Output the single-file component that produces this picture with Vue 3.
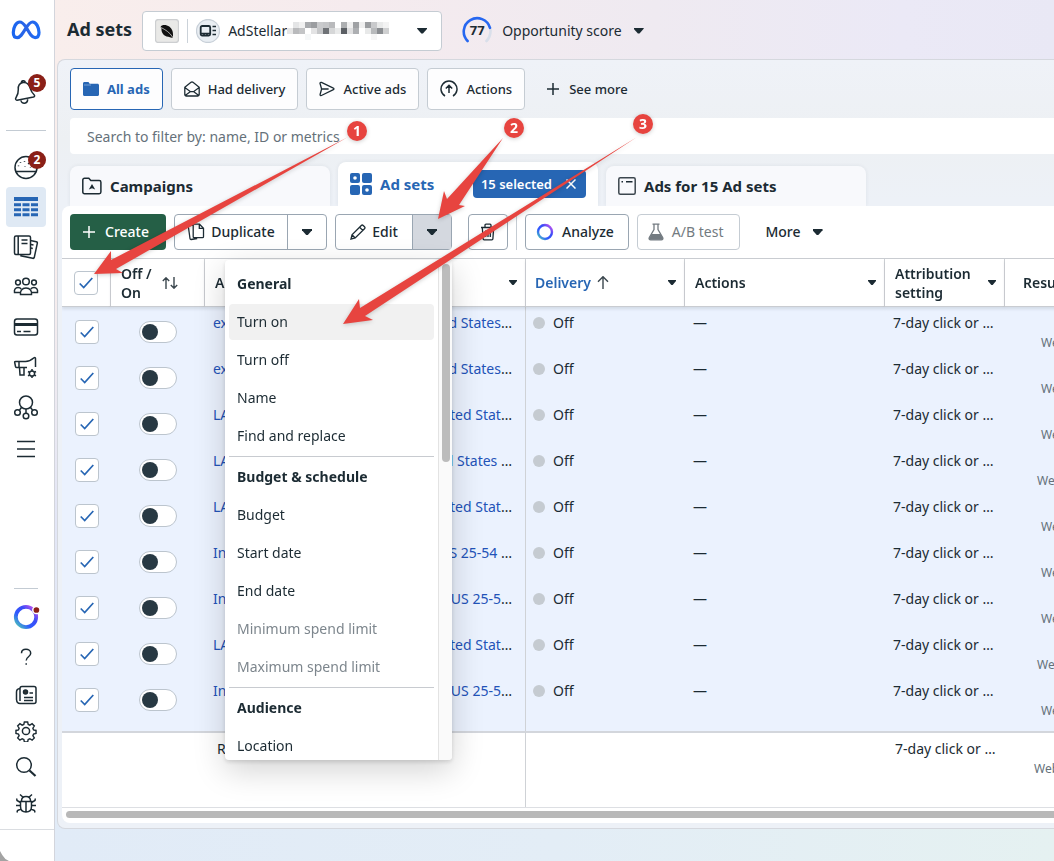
<script setup>
import { ref } from 'vue'

const filterText = ref('')

const rows = [
  { head: 'ex', tail: 'd States', short: false },
  { head: 'ex', tail: 'd States', short: false },
  { head: 'LA', tail: 'ited Stat', short: false },
  { head: 'LA', tail: 'd States ', short: true },
  { head: 'LA', tail: 'ited Stat', short: false },
  { head: 'In', tail: 'US 25-54 ', short: false },
  { head: 'In', tail: 'US 25-5', short: false },
  { head: 'LA', tail: 'ited Stat', short: true },
  { head: 'In', tail: 'US 25-5', short: false },
  { head: 'In', tail: 'ited Stat', short: false },
]

const menu = [
  { title: 'General', items: [{ t: 'Turn on', on: true }, { t: 'Turn off' }, { t: 'Name' }, { t: 'Find and replace' }] },
  { title: 'Budget & schedule', items: [{ t: 'Budget' }, { t: 'Start date' }, { t: 'End date' }, { t: 'Minimum spend limit', off: true }, { t: 'Maximum spend limit', off: true }] },
  { title: 'Audience', items: [{ t: 'Location' }] },
]

const mosaic = [
  ['#e6e6e6', 0, 7], ['#b9babc', 6, 7], ['#e4e5e6', 6, 1], ['#f1f1f1', 12, 1], ['#a9abae', 18, 1], ['#c3c4c6', 12, 7], ['#e3e3e4', 24, 7],
  ['#9b9da0', 24, 1], ['#c9cacc', 30, 1], ['#f5f7f8', 18, 13], ['#c6c7c9', 30, 7], ['#6f7276', 36, 7], ['#c5c6c8', 36, 1], ['#d6d7d8', 42, 7], ['#b9babc', 42, 1],
  ['#e9eaea', 48, 7], ['#5b5f64', 54, 7], ['#adafb1', 54, 1], ['#e0e0e1', 60, 7], ['#f0f0f0', 60, 1], ['#adafb2', 66, 7], ['#9fa1a4', 66, 1],
  ['#efefef', 72, 1], ['#e8e9e9', 78, 7], ['#9c9ea1', 78, 1], ['#b8babc', 84, 7], ['#c9cacc', 84, 1], ['#8b8e92', 90, 7], ['#e9eaea', 90, 1], ['#cfd0d1', 96, 7], ['#f3f3f3', 96, 1], ['#f6f6f6', 84, 13],
]
</script>

<template>
  <div class="app">
    <aside class="side">
      <nav class="rail" aria-label="Main">
        <a class="logo" href="#" aria-label="Meta">
          <svg width="30" height="20" viewBox="0 0 30 20">
            <defs><linearGradient id="mg"><stop offset="0" stop-color="#1a66f0" /><stop offset=".5" stop-color="#2a63e6" /><stop offset="1" stop-color="#1d6cf5" /></linearGradient></defs>
            <path stroke="url(#mg)" stroke-width="3.2" d="M15 7C12.600 3.600 11 2 8.800 2 5 2 2.300 7.500 2.300 12.600c0 3.200 1.500 5.100 3.900 5.100C9 17.700 10.800 15 15 8c3-4.800 4.600-6 6.600-6C25.200 2 28 7.500 28 12.600c0 3.200-1.500 5.100-3.900 5.100C21.200 17.700 19.500 15 15 7Z" />
          </svg>
        </a>
        <button class="nav bell" aria-label="Notifications">
          <svg width="26" height="28" viewBox="0 0 26 28"><path d="M10 4.500c-3.500.6-5 3.500-4.700 7 .3 4-.8 5.700-2.500 8.500-.6 1 0 2.300 1.300 2.200L20.500 19c1.200-.3 1.500-1.500.6-2.300-2.200-2-2.800-3-3.700-6C16.300 6.500 13.800 3.900 10 4.500ZM8.500 4.800c-.4-2.200 3.200-3 3.800-.6M8 22.500c.3 4 7 3.500 6.600-1.200" /></svg>
          <span class="badge">5</span>
        </button>
        <hr class="rule">
        <button class="nav" aria-label="Overview">
          <svg width="26" height="26" viewBox="0 0 26 26"><circle cx="13" cy="13.500" r="11" /><path d="M2.500 17.500h21M5.500 11.500v.8M7.500 8v.8M11.500 7v.8M12 12.500v.6M17.500 13.500v.6M15 10l3-2" /></svg>
          <span class="badge">2</span>
        </button>
        <button class="nav active" aria-label="Ads manager">
          <svg class="fill" width="24" height="20" viewBox="0 0 24 20"><path d="M0 0h24v4H0zM0 6.200h7v3H0zM8.500 6.200h7v3h-7zM17 6.200h7v3h-7zM0 11.200h7v3H0zM8.500 11.200h7v3h-7zM17 11.200h7v3h-7zM0 16.200h7v3H0zM8.500 16.200h7v3h-7zM17 16.200h7v3h-7z" /></svg>
        </button>
        <button class="nav" aria-label="Reports">
          <svg width="26" height="26" viewBox="0 0 26 26"><rect x="1.500" y="2" width="16" height="18.500" rx="1.500" /><path d="M5.200 2v18.500M8.500 6h6M8.500 9.500h6M17.500 6.500l5.800 1.200c.8.200 1.200.8 1 1.600l-3 14c-.2.800-.8 1.200-1.600 1L8 21.800v-1M18 10.500l2.500.5M18 14l1.800.4" /></svg>
        </button>
        <button class="nav" aria-label="Audiences">
          <svg width="26" height="22" viewBox="0 0 26 22"><circle cx="13" cy="5.500" r="3.300" /><circle cx="5" cy="6.500" r="2.400" /><circle cx="21" cy="6.500" r="2.400" /><path d="M7.500 18.500c-.6-3 1.200-6.500 5.500-6.500s6.100 3.500 5.500 6.500ZM7 16.500H1.500c-.5-3 1-5 3.500-5 1.500 0 2.500.5 3.200 1.500M19 16.500h5.500c.5-3-1-5-3.500-5-1.500 0-2.500.5-3.200 1.500" /></svg>
        </button>
        <button class="nav" aria-label="Billing">
          <svg width="26" height="22" viewBox="0 0 26 22"><rect x="1.500" y="3" width="23" height="16" rx="2.500" /><path d="M4 15.500h4M10.500 15.500h7" /><path stroke-width="3" d="M1.500 8.500h23" /></svg>
        </button>
        <button class="nav" aria-label="Ad settings">
          <svg width="26" height="24" viewBox="0 0 26 24"><path d="M22.500 12V3.500c0-1-.8-1.200-1.500-.7C18.500 5 15.500 6.500 12.500 6.500h-10c-.8 0-1 .4-.8 1l.8 4c.2.700.6 1 1.300 1H14M6 7v5.500M6.500 12.500l.5 7.500h4v-7.500" /><path d="M19 14v2m0 5v2m-4-6.500 1.600.9m4.700 2.600 1.700.9m0-4.400-1.700.9m-4.700 2.600-1.600.9" /><circle cx="19" cy="18.500" r="2.600" /></svg>
        </button>
        <button class="nav" aria-label="Events">
          <svg width="26" height="26" viewBox="0 0 26 26"><circle cx="13" cy="8.500" r="6.500" /><circle cx="4.500" cy="18.500" r="2.800" /><circle cx="13" cy="22" r="2.800" /><circle cx="21.500" cy="18.500" r="2.800" /><path d="M13 15v4M8.500 13.500l-2 2.500M17.500 13.500l2 2.500" /></svg>
        </button>
        <button class="nav tall" aria-label="All tools">
          <svg width="20" height="18" viewBox="0 0 20 18"><path d="M1 1.500h18M1 9h18M1 16.500h18" /></svg>
        </button>

        <hr class="rule low">
        <button class="nav" aria-label="Assistant">
          <svg width="28" height="28" viewBox="0 0 28 28">
            <defs><linearGradient id="rg" x1="0" y1="1" x2="1" y2="0"><stop offset="0" stop-color="#4fd0b0" /><stop offset=".35" stop-color="#2f5bff" /><stop offset=".65" stop-color="#3b4cf6" /><stop offset="1" stop-color="#e055f0" /></linearGradient></defs>
            <circle cx="14" cy="14" r="10.200" stroke="url(#rg)" stroke-width="3.800" /><circle cx="24.400" cy="7" r="3.600" fill="#8a1f17" stroke="#fff" />
          </svg>
        </button>
        <button class="nav" aria-label="Help">
          <svg width="14" height="18" viewBox="0 0 14 18"><path d="M2.500 5.200C2.500 2.800 4.500 1.300 7 1.300s4.700 1.500 4.700 4C11.700 9 7.200 8.500 7.200 12.500M7.200 15.200v1.600" /></svg>
        </button>
        <button class="nav short" aria-label="News">
          <svg width="22" height="20" viewBox="0 0 22 20"><path d="M5 3.500C5 2 5.500 1.500 7 1.500h12c1.500 0 2 .5 2 2v13c0 1.500-.5 2-2 2H5c-2.500 0-3.300-1.500-3.500-4V7c0-1.700.8-3.300 3.500-3.500Zm0 0V16M9 12.500h9M9 15.500h9M14.500 8H18" /><circle cx="10.500" cy="7" r="2" fill="#333" /></svg>
        </button>
        <button class="nav short" aria-label="Settings">
          <svg width="22" height="22" viewBox="0 0 22 22"><path d="M9.300 1.500h3.400l.6 2.700 1.700.7 2.400-1.500 2.300 2.300-1.500 2.400.7 1.700 2.600.6v3.200l-2.600.6-.7 1.700 1.500 2.400-2.300 2.300-2.400-1.500-1.700.7-.6 2.600H9.300l-.6-2.600-1.700-.7-2.400 1.500-2.300-2.300 1.500-2.400-.7-1.700-2.600-.6v-3.200l2.600-.6.7-1.700-1.500-2.400 2.300-2.300L7 4.900l1.700-.7Z" transform="translate(.5 .5) scale(.955)" /><circle cx="11" cy="11" r="3.600" /></svg>
        </button>
        <button class="nav short" aria-label="Search">
          <svg width="22" height="22" viewBox="0 0 22 22"><circle cx="9" cy="9" r="7.300" /><path stroke-width="2.200" d="m14.500 14.500 6 5.500" /></svg>
        </button>
        <button class="nav short" aria-label="Report a bug">
          <svg width="22" height="22" viewBox="0 0 22 22"><path d="M5.500 9.500h11v5c0 3.500-2.300 5.500-5.500 5.500s-5.500-2-5.500-5.500ZM6.500 9c0-3 1.700-4.500 4.500-4.500S15.500 6 15.500 9M11 10v10M7.800 5 5 2.500M14.200 5 17 2.500M5.500 10.500 2 8.500l-.3-2M16.500 10.500l3.500-2 .3-2M5.500 13.500H1M16.500 13.500H21M6 17l-3.500 1.500L2 20.500M16 17l3.500 1.500.5 2" /></svg>
        </button>
      </nav>
      <div class="corner"></div>
    </aside>

    <main class="main">
      <header class="top">
        <h1>Ad sets</h1>
        <button class="account">
          <svg width="24" height="24" viewBox="0 0 24 24"><rect x=".5" y=".5" width="23" height="23" rx="3" fill="#e9e9e7" stroke="#cdcfd1" /><path fill="#111" d="M7 6.500c4-1.500 9 1 10.500 5.500.5 1.500.8 5 .3 6.500-2 .4-3-.2-4.500-.7C8.500 17.500 6 13 6.500 9.500c-1.200-1-1-2.600.5-3Z" /><path stroke="#e9e9e7" stroke-width=".7" d="M6 8.500c4 2 9 5 11.500 9.500" /></svg>
          <i class="bar"></i>
          <svg width="24" height="24" viewBox="0 0 24 24"><circle cx="12" cy="12" r="11.500" fill="#e9eef3" stroke="#c8d0d8" /><rect x="4.700" y="7" width="9.500" height="9.500" rx="1.500" stroke="#1c2b33" stroke-width="1.800" /><path stroke="#1c2b33" stroke-width="1.600" d="M5 14.500h9M8 17v-2M11 17v-2M16.500 7.500H20M16.500 11.500H20M16.500 15.500H20" /></svg>
          <span class="acct">AdStellar<svg class="mosaic" width="104" height="20" viewBox="0 0 104 20"><rect v-for="(m, i) in mosaic" :key="i" :x="m[1]" :y="m[2]" width="6" height="6" :fill="m[0]" /></svg></span>
          <i class="caret"></i>
        </button>
        <button class="score">
          <span class="dial">
            <svg width="30" height="30" viewBox="0 0 30 30" stroke-linecap="round"><path stroke="#d9dfea" stroke-width="2.600" d="M28.500 14c.2 4-1.200 8-4 11" /><path stroke="#2667f0" stroke-width="2.600" d="M5.600 25A13.400 13.400 0 1 1 28 11.800" /></svg>
            <b>77</b>
          </span>
          Opportunity score
          <i class="caret"></i>
        </button>
      </header>

      <section class="panel">
        <div class="filters">
          <button class="chip sel"><svg width="16" height="14" viewBox="0 0 16 14"><path fill="#2766b4" d="M1.500 0h4l1.200 1.800H14.500c.9 0 1.500.6 1.500 1.500v9.200c0 .9-.6 1.500-1.500 1.500h-13C.6 14 0 13.400 0 12.500v-11C0 .6.600 0 1.500 0Z" /><path stroke="#8db0dc" stroke-width=".8" d="M1 3h7" /></svg>All ads</button>
          <button class="chip"><svg width="16" height="16" viewBox="0 0 16 16"><path d="M.8 6.200 7 1.300c.6-.4 1.400-.4 2 0l6.200 4.900v7.300c0 .9-.6 1.500-1.500 1.500H2.300c-.9 0-1.500-.6-1.500-1.500ZM.8 6.500l5.700 4.200h3l5.700-4.200M1.200 14.500l5.300-4M14.800 14.500l-5.300-4" /></svg>Had delivery</button>
          <button class="chip"><svg width="16" height="16" viewBox="0 0 16 16"><path d="M1 2.300c0-.8.700-1.200 1.400-.9l12 5.800c.7.300.7 1.200 0 1.500l-12 5.800c-.7.300-1.500-.2-1.300-1L2.600 8ZM2.600 8h7" /></svg>Active ads</button>
          <button class="chip"><svg width="18" height="18" viewBox="0 0 18 18"><path d="M5 16A8 8 0 1 1 13 16M9 13V5.500M5.800 8.500 9 5.300l3.200 3.200" stroke-width="1.500" /></svg>Actions</button>
          <button class="chip plain"><svg width="12" height="12" viewBox="0 0 12 12"><path d="M6 0v12M0 6h12" stroke-width="1.500" /></svg>See more</button>
        </div>

        <input v-model="filterText" class="search" type="text" placeholder="Search to filter by: name, ID or metrics" aria-label="Search to filter">

        <div class="tabs">
          <button class="tab"><svg width="20" height="18" viewBox="0 0 20 18"><path stroke="#1c2b33" d="M2.500 1.200h4.300l2 2.300h8.400c1 0 1.700.7 1.700 1.700v9.900c0 1-.7 1.700-1.700 1.700H2.500c-1 0-1.700-.7-1.700-1.700V2.900c0-1 .7-1.700 1.700-1.700Z" stroke-width="1.500" /><path fill="#1c2b33" d="m10 7 3.200 5.500-3.200-1.300-3.200 1.300Z" /></svg>Campaigns</button>
          <button class="tab cur">
            <svg width="22" height="22" viewBox="0 0 22 22"><g fill="#2766b4"><rect width="10" height="10" rx="2" /><rect x="12" width="10" height="10" rx="2" /><rect y="12" width="10" height="10" rx="2" /><rect x="12" y="12" width="10" height="10" rx="2" /></g><circle cx="5" cy="5" r="1.800" fill="#fff" /><circle cx="17" cy="17" r="1.800" fill="#fff" /></svg>
            Ad sets
            <span class="pill">15 selected<svg width="10" height="10" viewBox="0 0 10 10"><path stroke="#fff" stroke-width="1.500" d="m.5.5 9 9M9.500.5l-9 9" /></svg></span>
          </button>
          <button class="tab"><svg width="18" height="18" viewBox="0 0 18 18"><rect x=".8" y=".8" width="16.400" height="16.400" rx="1.500" stroke="#3c474e" stroke-width="1.500" /><path stroke="#1c2b33" stroke-width="1.500" d="M3.500 4.800H5M8 4.800h6.500" /></svg>Ads for 15 Ad sets</button>
        </div>

        <div class="card">
          <div class="tools">
            <button class="btn create"><svg width="12" height="12" viewBox="0 0 12 12"><path stroke="#fff" stroke-width="1.500" d="M6 0v12M0 6h12" /></svg>Create</button>
            <div class="split dup">
              <button><svg width="18" height="18" viewBox="0 0 18 18"><path d="M7.200 1.200h5.300l4 4v8.500c0 .6-.4 1-1 1H7.200c-.6 0-1-.4-1-1V2.200c0-.6.4-1 1-1ZM12.300 1.400v4h4M6 2.200l-3.700.6c-.6.100-1 .6-.9 1.200L3 15.500c.1.700.6 1.100 1.200 1l6-1" /></svg>Duplicate</button>
              <button class="arrow" aria-label="Duplicate options"><i class="caret"></i></button>
            </div>
            <div class="split edit">
              <button><svg width="16" height="16" viewBox="0 0 16 16"><path d="m1 15 1-4.200L11.300 1.500c.6-.6 1.300-.6 1.900 0l1.300 1.300c.6.600.6 1.300 0 1.900L5.200 14ZM9.600 3.200l3.200 3.200M2 10.800 5.200 14" /></svg>Edit</button>
              <button class="arrow open" aria-label="Edit options" aria-expanded="true"><i class="caret"></i></button>
              <div class="menu" role="menu">
                <div class="list">
                  <div v-for="g in menu" :key="g.title" class="group">
                    <h3>{{ g.title }}</h3>
                    <button v-for="it in g.items" :key="it.t" role="menuitem" :class="{ hot: it.on }" :disabled="it.off">{{ it.t }}</button>
                  </div>
                </div>
                <div class="track"><div class="thumb"></div></div>
              </div>
            </div>
            <button class="btn trash" aria-label="Delete"><svg width="16" height="18" viewBox="0 0 16 18"><path d="M1 4.500h14M5 4.300V2.200c0-.6.4-1 1-1h4c.6 0 1 .4 1 1v2.100M2.300 4.500l.8 11.300c0 .6.500 1 1.100 1h7.600c.6 0 1.100-.4 1.100-1l.8-11.300M5.700 7.500v6.500M8 7.500v6.500M10.300 7.500v6.500" /></svg></button>
            <i class="sep"></i>
            <button class="btn"><svg width="18" height="18" viewBox="0 0 18 18"><circle cx="9" cy="9" r="7" stroke="url(#rg)" stroke-width="2.400" /></svg>Analyze</button>
            <button class="btn ab" disabled><svg width="16" height="18" viewBox="0 0 16 18"><path stroke="#737b81" d="M4.500 1.200h7M6 1.500v5L1.300 14.500c-.6 1.200 0 2.300 1.400 2.300h10.600c1.400 0 2-1.100 1.400-2.300L10 6.500v-5" /><path fill="#737b81" d="M3.500 11h9l2.300 4c.4 1-.2 1.800-1.300 1.800h-11c-1.100 0-1.700-.8-1.300-1.800Z" /></svg>A/B test</button>
            <button class="btn more">More<i class="caret"></i></button>
          </div>

          <div class="grid">
            <table>
              <colgroup><col class="c1"><col class="c2"><col class="c3"><col class="c4"><col class="c5"><col class="c6"><col class="c7"></colgroup>
              <thead>
                <tr>
                  <th><label class="cb"><input type="checkbox" checked aria-label="Select all"><svg width="14" height="12" viewBox="0 0 14 12"><path d="m.7 6.500 4 4L13.300 1" /></svg></label></th>
                  <th><div class="th"><span>Off /<br>On</span><svg class="sort" width="16" height="12" viewBox="0 0 16 12"><path d="M4 12V1M.8 4 4 .8 7.200 4M12 0v11M8.800 8l3.200 3.200L15.200 8" /></svg></div></th>
                  <th><div class="th">A<i class="caret"></i></div></th>
                  <th><div class="th blue">Delivery<svg class="up" width="12" height="13" viewBox="0 0 12 13"><path d="M6 13V1M1 5.700l5-5 5 5" /></svg><i class="caret"></i></div></th>
                  <th><div class="th">Actions<i class="caret"></i></div></th>
                  <th><div class="th"><span>Attribution<br>setting</span><i class="caret"></i></div></th>
                  <th><div class="th res">Results</div></th>
                </tr>
              </thead>
              <tbody>
                <tr v-for="(r, i) in rows" :key="i">
                  <td class="pick"><label class="cb"><input type="checkbox" checked :aria-label="'Select row ' + (i + 1)"><svg width="14" height="12" viewBox="0 0 14 12"><path d="m.7 6.500 4 4L13.300 1" /></svg></label></td>
                  <td class="onoff"><input class="switch" type="checkbox" role="switch" :aria-label="'Row ' + (i + 1) + ' on or off'"></td>
                  <td class="name"><div><a href="#">{{ r.head }}</a><span><a href="#">{{ r.tail }}</a>…</span></div></td>
                  <td class="deliv"><i class="dot"></i>Off</td>
                  <td class="dash">—</td>
                  <td class="attr">7-day click or …</td>
                  <td class="web" :class="{ near: r.short }">Website</td>
                </tr>
              </tbody>
              <tfoot>
                <tr>
                  <td colspan="2"></td>
                  <td class="sum">R</td>
                  <td></td>
                  <td></td>
                  <td class="attr">7-day click or …</td>
                  <td class="web">Website</td>
                </tr>
              </tfoot>
            </table>
          </div>
          <div class="hscroll"><div></div></div>
        </div>
      </section>
      <footer class="base"></footer>
    </main>

    <svg class="notes" width="1054" height="861" viewBox="0 0 1054 861">
      <g fill="#e7443f">
        <path d="m348 137-237 123v-9L94 274l29-1-7-4Z" />
        <path d="m503 138-56 61-3-8-6 28 27-13-6-1Z" />
        <path d="M637 137 360 308l-1-9-16 25 30-4-8-4Z" />
        <circle cx="357" cy="131" r="10" /><circle cx="514" cy="128" r="10" /><circle cx="643" cy="124" r="10" />
      </g>
      <g class="nums"><text x="357" y="136">1</text><text x="514" y="133">2</text><text x="643" y="129">3</text></g>
    </svg>
  </div>
</template>

<style>
body { margin: 0; }
</style>

<style scoped>
* { box-sizing: border-box; }
.app { position: relative; display: flex; height: 100vh; overflow: hidden; font: 400 14px/20px "Noto Sans", sans-serif; color: #1c2b33; background: #fff; }
button, input { font: inherit; color: inherit; margin: 0; }
button { display: flex; align-items: center; padding: 0; border: 0; background: none; white-space: nowrap; }
a { color: #2353b8; text-decoration: none; }
svg { flex: none; fill: none; stroke-width: 1.3; }
.caret { flex: none; width: 10px; height: 6px; background: #1c2b33; clip-path: polygon(0 0, 100% 0, 100% 20%, 58% 100%, 42% 100%, 0 20%); }

.side { position: relative; flex: none; width: 55px; display: flex; flex-direction: column; padding-bottom: 31px; border-right: 1px solid #d3d5dc; }
.rail { flex: 1; display: flex; flex-direction: column; align-items: center; width: 54px; padding: 0 2px 8px 0; border-bottom: 1px solid #dadde1; }
.logo { display: flex; align-items: center; height: 60px; margin-bottom: 12px; }
.nav { position: relative; flex: none; justify-content: center; width: 40px; height: 40px; border-radius: 4px; }
.nav svg { stroke: #1c2b33; stroke-width: 1.5; }
.nav svg.fill { fill: #2766b4; stroke: none; }
.nav.short { height: 36px; }
.nav.tall { height: 44px; }
.active { background: #dfe9f4; }
.rule { width: 40px; height: 1px; margin: 18px 0 16px; border: 0; background: #c3cbd3; }
.rule.low { width: 24px; margin: auto 0 8px; }
.badge { position: absolute; top: 4px; right: 0; width: 18px; height: 18px; border-radius: 9px; background: #8a1f17; color: #fff; font: 700 12px/18px "Noto Sans", sans-serif; text-align: center; }
.bell .badge { top: 2px; }
.corner { position: absolute; left: 0; bottom: 0; width: 9px; height: 10px; background: #a3a3a3; clip-path: polygon(0 0, 25% 40%, 60% 80%, 100% 100%, 0 100%); }

.main { flex: 1; min-width: 0; display: flex; flex-direction: column; background: linear-gradient(#f9eeec00 30%, #e3e6f6 60%, #e1ebf7 85%), linear-gradient(to right, #f9eeec, #f5ebee 30%, #efeaf1 60%, #ebe9f6 85%, #e9e8f5); }
.top { flex: none; display: flex; align-items: center; height: 59px; padding: 2px 12px 0; }
h1 { margin: 0 10px 4px 0; font-size: 18px; line-height: 24px; font-weight: 700; }
.account { width: 300px; height: 40px; padding: 0 14px 0 12px; border: 1px solid #c5ccd3; border-radius: 4px; background: #fff; }
.bar { width: 1px; height: 24px; margin: 0 8px; background: #cbd2d9; }
.acct { display: flex; align-items: center; flex: 1; margin-left: 8px; }
.score { gap: 10px; margin-left: 20px; }
.score .caret { margin-left: 2px; }
.dial { position: relative; display: flex; }
.dial b { position: absolute; inset: 0; font-size: 13px; line-height: 28px; text-align: center; }

.panel { flex: 1; min-height: 0; display: flex; flex-direction: column; margin-left: 2px; padding: 8px 0 5px 4px; border: 1px solid #d5d8de; border-right: 0; border-radius: 8px 0 0 8px; background: linear-gradient(#eff2f8, #edf0f3 80px, #edf1f7 140px); }
.filters { display: flex; gap: 8px; padding-left: 8px; }
.chip { gap: 8px; height: 42px; padding: 0 12px; border: 1px solid #c5ccd3; border-radius: 4px; background: #fdfdfe; font-size: 13px; font-weight: 500; }
.chip svg { stroke: #1c2b33; }
.chip.sel { border-color: #2766b4; color: #2766b4; font-weight: 700; }
.chip.sel svg { stroke: none; }
.chip.plain { padding: 0 14px; border: 0; background: none; gap: 10px; }
.search { margin: 8px 0 8px 8px; height: 36px; padding: 0 17px; border: 0; border-radius: 4px 0 0 4px; background: #fff; }
.search::placeholder { color: #65717a; opacity: 1; }
.tabs { display: flex; align-items: flex-end; gap: 8px; padding-left: 8px; }
.tab { width: 260px; height: 40px; padding: 0 12px; gap: 8px; border-radius: 8px 8px 0 0; background: #f8f9fc; font-size: 15px; font-weight: 700; box-shadow: 0 0 4px #1c2b3312; }
.tab.cur { height: 44px; background: #fff; color: #2766b4; }
.pill { display: flex; align-items: center; gap: 14px; margin-left: auto; height: 28px; padding: 0 10px 0 8px; border-radius: 4px; background: #2766b4; color: #fff; font-size: 13px; font-weight: 600; }

.card { flex: 1; min-height: 0; display: flex; flex-direction: column; position: relative; border-radius: 8px 0 0 8px; background: #fff; }
.tools { position: relative; z-index: 3; flex: none; display: flex; align-items: center; gap: 8px; padding: 8px; font-weight: 500; }
.btn, .split { height: 36px; border: 1px solid #9aa6b2; border-radius: 4px; background: #fff; }
.btn { gap: 8px; padding: 0 14px 0 10px; }
.create { gap: 10px; width: 96px; padding-left: 13px; border: 0; background: #255f46; color: #fff; }
.split { position: relative; z-index: 1; display: flex; }
.split > button { flex: 1; justify-content: center; gap: 6px; }
.split > .arrow { flex: none; width: 39px; border-left: 1px solid #9aa6b2; }
.split > .open { background: #d4d8df; }
.dup { width: 153px; }
.edit { width: 117px; }
.split svg, .trash svg { stroke: #1c2b33; }
.trash { width: 40px; margin-left: 8px; padding: 0; justify-content: center; }
.sep { width: 1px; height: 36px; background: #c5ccd3; }
.ab { border-color: #c5ccd3; padding-right: 16px; color: #737b81; font-weight: 400; }
.more { border: 0; padding-left: 17px; gap: 12px; }

.menu { position: absolute; top: 45px; right: -1px; width: 227px; height: calc(100vh - 361px); display: flex; border-radius: 4px; overflow: hidden; background: #fff; box-shadow: 0 2px 4px #0002, 0 10px 32px #0000002e; }
.list { flex: 1; overflow: hidden; padding: 4px 4px 0; }
.group + .group { margin-top: 1px; border-top: 1px solid #c8cbd0; }
.menu h3 { margin: 0; padding: 10px 8px; font-size: 14px; line-height: 20px; font-weight: 700; }
.list button { width: 100%; height: 36px; margin-bottom: 2px; padding: 0 8px; border-radius: 4px; font-weight: 400; }
.list button:disabled { color: #7d868d; }
.list .hot { background: #f1f1f1; }
.track { flex: none; width: 14px; padding: 4px 2px 0 3px; border-left: 1px solid #e3e3e3; background: #fafafa; }
.thumb { height: 198px; width: 8px; border-radius: 4px; background: #bcbcbc; }

.grid { flex: 1; min-height: 0; overflow: hidden; border-top: 1px solid #c9ccd1; border-bottom: 1px solid #dddfe3; }
table { width: 1112px; table-layout: fixed; border-collapse: separate; border-spacing: 0; }
.c1 { width: 49px; } .c2 { width: 94px; } .c3 { width: 321px; } .c4 { width: 159px; } .c5 { width: 200px; } .c6 { width: 120px; } .c7 { width: 169px; }
thead th { position: sticky; top: 0; z-index: 1; height: 48px; padding: 0; border-right: 1px solid #cfd2d6; border-bottom: 1px solid #c9ccd1; background: #fff; text-align: left; font-weight: 600; line-height: 19px; box-shadow: 0 2px 3px #1c2b331f; }
.th { display: flex; align-items: center; padding: 0 8px 0 10px; }
.th .caret { width: 8px; height: 5px; margin-left: auto; }
.th svg { stroke: #3a464d; stroke-width: 1.4; }
.sort { margin-left: 10px; }
.blue { padding-left: 9px; color: #2766b4; }
.up { margin-left: 6px; }
.res { padding-left: 18px; }
.cb { display: grid; width: 24px; height: 24px; margin-left: 12px; place-items: center; }
.cb input { grid-area: 1 / 1; appearance: none; width: 24px; height: 24px; border: 1px solid #bcc5ce; border-radius: 4px; background: #fff; }
.cb svg { grid-area: 1 / 1; z-index: 0; stroke: #2766b4; stroke-width: 1.7; }
tbody td { height: 46px; padding: 6px 8px 0; background: #ebf2fe; vertical-align: top; }
tbody .pick { padding: 13px 0 0 1px; }
tbody .onoff { padding: 14px 0 0 28px; }
.switch { appearance: none; display: block; width: 38px; height: 22px; padding: 2px; border: 1px solid #bcc5ce; border-radius: 11px; background: #fff; }
.switch::before { content: ""; display: block; width: 16px; height: 16px; border-radius: 8px; background: #283943; }
.name { border-right: 1px solid #cfd2d6; }
.name div { display: flex; justify-content: space-between; padding-right: 5px; white-space: pre; }
tbody .deliv { padding-left: 7px; }
.dot { display: inline-block; width: 12px; height: 12px; margin-right: 8px; border-radius: 6px; background: #c5cbd1; vertical-align: -1px; }
.attr { white-space: nowrap; }
.web { color: #65717a; font-size: 12px; }
tbody .web { padding: 26px 0 0 36px; }
tbody .near { padding-left: 32px; }
tfoot td { position: sticky; bottom: 0; z-index: 1; height: 76px; padding: 6px 10px; border-top: 2px solid #d3d6dc; background: #fff; vertical-align: top; }
tfoot .sum { padding-left: 12px; border-right: 1px solid #cfd2d6; }
tfoot .web { padding: 26px 0 0 29px; }
.hscroll { flex: none; height: 15px; padding: 3px 0 0 4px; overflow: hidden; }
.hscroll div { height: 7px; border-radius: 4px 0 0 4px; background: #b8b8b8; }
.base { flex: none; height: 32px; background: linear-gradient(to right, #e1ebf7, #e3edf6 50%, #e5f1f1); }

.notes { position: absolute; top: 0; left: 0; z-index: 5; pointer-events: none; filter: drop-shadow(0 1px 2px #0003); }
.nums { fill: #fff; font: 700 14px "Noto Sans", sans-serif; text-anchor: middle; }
</style>
